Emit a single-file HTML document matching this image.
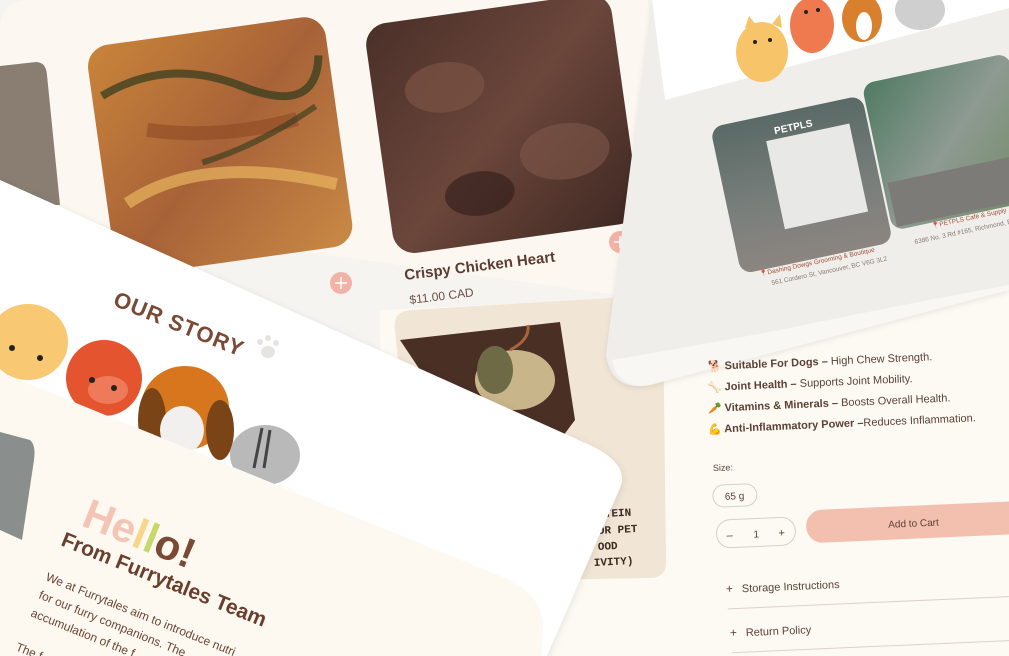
<!DOCTYPE html>
<html><head><meta charset="utf-8"><style>
html,body{margin:0;padding:0;background:#f6f4f1;}
svg{display:block}
text{font-family:"Liberation Sans","DejaVu Sans",sans-serif;}
</style></head><body>
<svg width="1009" height="656" viewBox="0 0 1009 656" xmlns="http://www.w3.org/2000/svg">
<defs>
<linearGradient id="pump" x1="0" y1="0" x2="1" y2="1">
<stop offset="0" stop-color="#c9853a"/><stop offset="0.5" stop-color="#a86238"/><stop offset="1" stop-color="#c98a45"/></linearGradient>
<linearGradient id="chick" x1="0" y1="0" x2="1" y2="1">
<stop offset="0" stop-color="#4a3029"/><stop offset="0.5" stop-color="#6b463b"/><stop offset="1" stop-color="#3e2822"/></linearGradient>
<linearGradient id="store1" x1="0" y1="0" x2="0" y2="1">
<stop offset="0" stop-color="#5a6a66"/><stop offset="0.6" stop-color="#7a7f7c"/><stop offset="1" stop-color="#8c8580"/></linearGradient>
<linearGradient id="store2" x1="0" y1="0" x2="1" y2="1">
<stop offset="0" stop-color="#4f7a62"/><stop offset="0.5" stop-color="#8e9a92"/><stop offset="1" stop-color="#6f8a60"/></linearGradient>
</defs>

<!-- product detail page (bottom right) -->
<path d="M380 310 L1009 282 L1009 656 L380 656 Z" fill="#fdfaf4"/>

<!-- tan card -->
<path d="M395 330 Q392 312 410 310 L645 296 Q662 296 663 312 L666 562 Q666 578 650 578 L420 582 Z" fill="#f1e5d5"/>
<path d="M400 340 L560 322 L575 420 L560 440 L470 420 L420 370 Z" fill="#4a2f25"/>
<ellipse cx="515" cy="380" rx="40" ry="30" fill="#c9b58a"/>
<ellipse cx="495" cy="370" rx="18" ry="24" fill="#6d6a45"/>
<path d="M510 350 Q530 340 528 325" stroke="#a8663b" stroke-width="3" fill="none"/>
<g fill="#3a2a22" font-weight="bold" font-size="11">
<text x="605" y="517" transform="rotate(-3 605 517)" style="font-family:'Liberation Mono',monospace">TEIN</text>
<text x="598" y="534" transform="rotate(-3 598 534)" style="font-family:'Liberation Mono',monospace">OR PET</text>
<text x="598" y="550" transform="rotate(-3 598 550)" style="font-family:'Liberation Mono',monospace">OOD</text>
<text x="594" y="566" transform="rotate(-3 594 566)" style="font-family:'Liberation Mono',monospace">IVITY)</text>
</g>

<!-- product card top-left -->
<path d="M0 30 Q0 0 30 0 L648 0 L687 278 Q690 298 670 302 L0 210 Z" fill="#fcf8f1"/>
<path d="M0 66 L36 62 Q46 62 47 75 L60 205 L0 205 Z" fill="#8a7e72"/>
<g transform="rotate(-8 220 145)"><rect x="100" y="30" width="240" height="232" rx="22" fill="url(#pump)"/>
<path d="M110 80 Q180 50 250 90 T330 70" stroke="#2f3a1c" stroke-width="8" fill="none" opacity=".7"/>
<path d="M120 190 Q200 150 330 200" stroke="#e8b560" stroke-width="12" fill="none" opacity=".7"/>
<path d="M150 120 Q220 140 300 130" stroke="#8d4a25" stroke-width="14" fill="none" opacity=".6"/>
<path d="M200 160 Q260 150 320 120" stroke="#2f3a1c" stroke-width="6" fill="none" opacity=".6"/></g>
<g transform="rotate(-8 500 122)"><rect x="378" y="8" width="248" height="232" rx="22" fill="url(#chick)"/>
<ellipse cx="450" cy="80" rx="40" ry="25" fill="#7a5245" opacity=".7"/>
<ellipse cx="560" cy="160" rx="45" ry="28" fill="#7e564a" opacity=".6"/>
<ellipse cx="470" cy="190" rx="35" ry="22" fill="#2e1d19" opacity=".6"/></g>
<text x="405" y="280" transform="rotate(-7 405 280)" font-size="15" font-weight="bold" fill="#5a3d30">Crispy Chicken Heart</text>
<text x="410" y="304" transform="rotate(-7 410 304)" font-size="12" fill="#6b5045">$11.00 CAD</text>
<circle cx="620" cy="242" r="11" fill="#f2b3a6"/><path d="M614 242h12M620 236v12" stroke="#fff" stroke-width="1.6"/>
<circle cx="341" cy="283" r="11" fill="#f2b3a6"/><path d="M335 283h12M341 277v12" stroke="#fff" stroke-width="1.6"/>

<!-- store card -->
<path d="M652 0 L1009 0 L1009 290 L650 385 Q612 392 606 355 Z" fill="#efeeea" filter="drop-shadow(0 2px 3px rgba(0,0,0,.08))"/>
<path d="M652 0 L1009 0 L1009 8 L665 100 Z" fill="#ffffff"/>
<path d="M612 360 Q700 345 780 330 Q900 305 1009 285 L1009 290 L650 385 Q618 390 612 360 Z" fill="#f8f7f3"/>
<ellipse cx="762" cy="52" rx="26" ry="30" fill="#f8c46a"/>
<path d="M745 28 l4 -12 8 10 M772 24 l8 -10 2 14" fill="#f8c46a"/>
<circle cx="755" cy="42" r="2" fill="#222"/><circle cx="770" cy="40" r="2" fill="#222"/>
<ellipse cx="812" cy="25" rx="22" ry="28" fill="#ef7a50"/>
<circle cx="806" cy="12" r="2" fill="#222"/><circle cx="818" cy="10" r="2" fill="#222"/>
<ellipse cx="862" cy="18" rx="20" ry="24" fill="#d9802e"/>
<ellipse cx="864" cy="26" rx="8" ry="14" fill="#ffffff"/>
<ellipse cx="920" cy="10" rx="25" ry="20" fill="#cfcfcf"/>
<g transform="rotate(-12 800 180)"><rect x="723" y="110" width="155" height="150" rx="12" fill="url(#store1)"/>
<rect x="775" y="135" width="85" height="90" fill="#e8e8e6"/>
<text x="785" y="130" font-size="10" fill="#fff" font-weight="bold">PETPLS</text></g>
<g transform="rotate(-12 945 140)"><rect x="875" y="68" width="150" height="150" rx="12" fill="url(#store2)"/>
<rect x="880" y="170" width="130" height="45" fill="#7c7b77"/></g>
<g font-size="6.5">
<text x="760" y="276" transform="rotate(-12 760 276)" fill="#a0503a">📍Dashing Dowgs Grooming &amp; Boutique</text>
<text x="772" y="285" transform="rotate(-12 772 285)" fill="#8a7a72">561 Cordero St, Vancouver, BC V6G 3L2</text>
<text x="932" y="228" transform="rotate(-12 932 228)" fill="#a0503a">📍PETPLS Café &amp; Supply</text>
<text x="915" y="244" transform="rotate(-12 915 244)" fill="#8a7a72">6386 No. 3 Rd #165, Richmond, BC</text>
</g>

<!-- product detail text -->
<g fill="#5b4136" font-size="11">
<text x="708" y="370" transform="rotate(-2.5 708 370)"><tspan font-weight="bold">🐕 Suitable For Dogs –</tspan> High Chew Strength.</text>
<text x="708" y="391" transform="rotate(-2.5 708 391)"><tspan font-weight="bold">🦴 Joint Health –</tspan> Supports Joint Mobility.</text>
<text x="708" y="412" transform="rotate(-2.5 708 412)"><tspan font-weight="bold">🥕 Vitamins &amp; Minerals –</tspan> Boosts Overall Health.</text>
<text x="708" y="433" transform="rotate(-2.5 708 433)"><tspan font-weight="bold">💪 Anti-Inflammatory Power –</tspan>Reduces Inflammation.</text>
<text x="713" y="471" font-size="9" transform="rotate(-2 713 471)">Size:</text>
</g>
<g transform="rotate(-2.5 860 520)">
<rect x="714" y="479" width="44" height="22" rx="11" fill="none" stroke="#d8cfc6"/>
<text x="726" y="494" font-size="10" fill="#5b4136">65 g</text>
<rect x="716" y="514" width="79" height="28" rx="14" fill="none" stroke="#d8cfc6"/>
<text x="726" y="533" font-size="11" fill="#5b4136">–</text>
<text x="753" y="533" font-size="10" fill="#5b4136">1</text>
<text x="778" y="533" font-size="11" fill="#5b4136">+</text>
<rect x="806" y="508" width="230" height="33" rx="16" fill="#f3c0b0"/>
<text x="888" y="529" font-size="10" fill="#5b4136">Add to Cart</text>
<text x="723" y="587" font-size="12" fill="#5b4136">+</text>
<text x="739" y="587" font-size="11" fill="#5b4136">Storage Instructions</text>
<line x1="724" y1="603" x2="1020" y2="603" stroke="#ddd1c8"/>
<text x="725" y="631" font-size="12" fill="#5b4136">+</text>
<text x="741" y="631" font-size="11" fill="#5b4136">Return Policy</text>
<line x1="726" y1="647" x2="1020" y2="647" stroke="#ddd1c8"/>
</g>

<!-- our story white card -->
<path d="M0 180 L592 446 Q630 465 620 488 L547 656 L0 656 Z" fill="#ffffff" filter="drop-shadow(0 2px 4px rgba(0,0,0,.1))"/>
<text x="112" y="305" transform="rotate(22 112 305)" font-size="22" font-weight="bold" fill="#7a4a35" letter-spacing="1">OUR STORY</text>
<g fill="#e6e4e0"><ellipse cx="268" cy="352" rx="7" ry="6"/><circle cx="260" cy="342" r="3"/><circle cx="268" cy="338" r="3"/><circle cx="276" cy="343" r="3"/></g>
<ellipse cx="28" cy="342" rx="40" ry="38" fill="#f8c873"/>
<circle cx="12" cy="348" r="3" fill="#222"/><circle cx="40" cy="358" r="3" fill="#222"/>
<circle cx="104" cy="378" r="38" fill="#e4552f"/>
<ellipse cx="108" cy="390" rx="20" ry="14" fill="#ef7a5a"/>
<circle cx="92" cy="380" r="3" fill="#222"/><circle cx="114" cy="388" r="3" fill="#222"/>
<ellipse cx="185" cy="408" rx="44" ry="42" fill="#d8761e"/>
<ellipse cx="152" cy="420" rx="14" ry="32" fill="#7a4416"/>
<ellipse cx="220" cy="430" rx="14" ry="30" fill="#7a4416"/>
<ellipse cx="182" cy="430" rx="22" ry="24" fill="#f2f0ee"/>
<circle cx="172" cy="448" r="5" fill="#111"/>
<ellipse cx="265" cy="455" rx="35" ry="30" fill="#b9b9b9"/>
<path d="M262 428 l-8 40 M270 430 l-6 38" stroke="#444" stroke-width="3"/>
<!-- hello cream card -->
<path d="M0 372 L505 578 Q545 596 543 630 L541 656 L0 656 Z" fill="#fdf9f1"/>
<path d="M0 432 L30 440 Q36 445 34 460 L22 540 L0 530 Z" fill="#8a8e8c"/>
<text x="80" y="525" transform="rotate(22 80 525)" font-size="42" font-weight="bold"><tspan fill="#f4c4b5">He</tspan><tspan fill="#f9d58a">l</tspan><tspan fill="#c7d86a">l</tspan><tspan fill="#7a4a35">o!</tspan></text>
<text x="60" y="545" transform="rotate(22 60 545)" font-size="21" font-weight="bold" fill="#6a3e2c">From Furrytales Team</text>
<g fill="#6a4536" font-size="12">
<text x="45" y="580" transform="rotate(22 45 580)">We at Furrytales aim to introduce nutri</text>
<text x="38" y="598" transform="rotate(22 38 598)">for our furry companions. The</text>
<text x="30" y="616" transform="rotate(22 30 616)">accumulation of the f</text>
<text x="15" y="650" transform="rotate(22 15 650)">The f</text>
</g>
</svg>
</body></html>
